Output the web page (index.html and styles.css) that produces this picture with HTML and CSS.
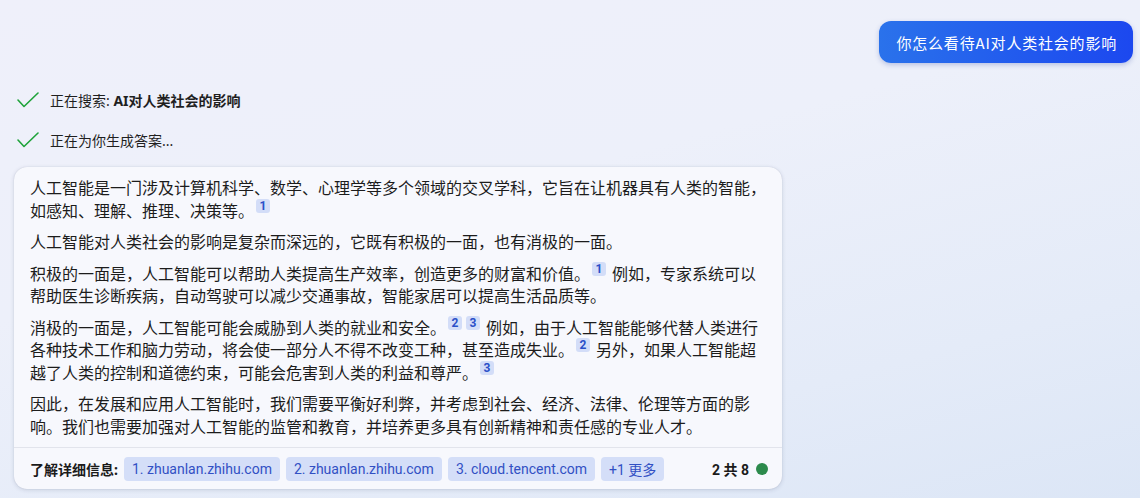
FILE: index.html
```html
<!DOCTYPE html>
<html lang="zh-CN">
<head>
<meta charset="utf-8">
<link rel="stylesheet" href="styles.css">
</head>
<body>
<div class="page">
  <div class="user-row">
    <div class="bubble">你怎么看待AI对人类社会的影响</div>
  </div>

  <div class="status">
    <div class="status-row">
      <svg class="check" width="22" height="16" viewBox="0 0 22 16"><polyline points="1,8 7,14.5 21,1" fill="none" stroke="#1fa33a" stroke-width="1.6" stroke-linecap="round" stroke-linejoin="round"/></svg>
      <span class="status-text">正在搜索: <b>AI对人类社会的影响</b></span>
    </div>
    <div class="status-row">
      <svg class="check" width="22" height="16" viewBox="0 0 22 16"><polyline points="1,8 7,14.5 21,1" fill="none" stroke="#1fa33a" stroke-width="1.6" stroke-linecap="round" stroke-linejoin="round"/></svg>
      <span class="status-text">正在为你生成答案...</span>
    </div>
  </div>

  <div class="card">
    <div class="card-body">
      <p>人工智能是一门涉及计算机科学、数学、心理学等多个领域的交叉学科，它旨在让机器具有人类的智能，如感知、理解、推理、决策等。<span class="cites"><span class="cite">1</span></span></p>
      <p>人工智能对人类社会的影响是复杂而深远的，它既有积极的一面，也有消极的一面。</p>
      <p>积极的一面是，人工智能可以帮助人类提高生产效率，创造更多的财富和价值。<span class="cites"><span class="cite">1</span></span>例如，专家系统可以帮助医生诊断疾病，自动驾驶可以减少交通事故，智能家居可以提高生活品质等。</p>
      <p>消极的一面是，人工智能可能会威胁到人类的就业和安全。<span class="cites"><span class="cite">2</span><span class="cite">3</span></span>例如，由于人工智能能够代替人类进行各种技术工作和脑力劳动，将会使一部分人不得不改变工种，甚至造成失业。<span class="cites"><span class="cite">2</span></span>另外，如果人工智能超越了人类的控制和道德约束，可能会危害到人类的利益和尊严。<span class="cites"><span class="cite">3</span></span></p>
      <p>因此，在发展和应用人工智能时，我们需要平衡好利弊，并考虑到社会、经济、法律、伦理等方面的影响。我们也需要加强对人工智能的监管和教育，并培养更多具有创新精神和责任感的专业人才。</p>
    </div>
    <div class="card-footer">
      <span class="learn">了解详细信息:</span>
      <span class="chip">1. zhuanlan.zhihu.com</span>
      <span class="chip">2. zhuanlan.zhihu.com</span>
      <span class="chip">3. cloud.tencent.com</span>
      <span class="chip">+1 更多</span>
      <span class="count">2 共 8</span>
      <span class="dot"></span>
    </div>
  </div>
</div>
</body>
</html>
```

FILE: styles.css
```css
* { box-sizing: border-box; }
html, body { margin: 0; padding: 0; }
body {
  width: 1140px;
  height: 498px;
  overflow: hidden;
  font-family: "Noto Sans", "Noto Sans CJK SC", sans-serif;
  color: #1b1b1b;
  background: linear-gradient(165deg, #eff0fa 0%, #edf0fa 40%, #e4ebf8 75%, #dce6f6 100%);
}
.page {
  padding: 21px 7px 0 14px;
}
.user-row {
  display: flex;
  justify-content: flex-end;
}
.bubble {
  height: 42px;
  padding: 0 16px 0 17px;
  display: flex;
  align-items: center;
  border-radius: 12px;
  background: linear-gradient(90deg, #2a72eb 0%, #2158ee 60%, #1c48ef 100%);
  color: #fff;
  font-size: 15px;
  letter-spacing: 0.8px;
  font-family: "Noto Sans CJK SC", sans-serif;
  box-shadow: 0 2px 5px rgba(30, 60, 160, 0.25);
}
.status {
  margin-top: 27px;
  padding-left: 3px;
  display: flex;
  flex-direction: column;
  gap: 20px;
}
.status-row {
  height: 20px;
  display: flex;
  align-items: center;
}
.check { flex: none; margin-right: 11px; }
.status-text {
  font-size: 14px;
  color: #1f1f1f;
}
.status-text b { font-weight: 700; }
.card {
  margin-top: 17px;
  width: 768px;
  border-radius: 13px;
  background: #f7f8fd;
  box-shadow: 0 1px 4px rgba(40, 50, 90, 0.16), 0 0 1px rgba(40, 50, 90, 0.2);
  overflow: hidden;
}
.card-body {
  padding: 9px 14px 10px 16px;
}
.card-body p {
  margin: 0 0 9px 0;
  font-size: 16px;
  line-height: 22.5px;
  color: #1c1c1c;
  font-family: "Noto Sans CJK SC", sans-serif;
}
.card-body p:last-child { margin-bottom: 0; }
.cites {
  display: inline-flex;
  gap: 4px;
  margin: 0 6px 0 2px;
  vertical-align: top;
}
.cite {
  width: 14px;
  height: 14px;
  border-radius: 3px;
  background: #d3ddf8;
  color: #2a4fc8;
  font-family: Roboto, "Noto Sans", sans-serif;
  font-size: 12px;
  font-weight: 700;
  line-height: 14px;
  text-align: center;
}
.card-footer {
  height: 42px;
  border-top: 1px solid #e2e4ec;
  display: flex;
  align-items: center;
  padding: 0 14px 0 16px;
  gap: 6px;
}
.learn {
  font-size: 14px;
  font-weight: 700;
  color: #1b1b1b;
}
.chip {
  height: 24px;
  display: flex;
  align-items: center;
  padding: 0 8px;
  border-radius: 4px;
  background: #d4def8;
  color: #3250c4;
  font-family: Roboto, "Noto Sans CJK SC", sans-serif;
  font-size: 14px;
}
.count {
  margin-left: auto;
  font-size: 14px;
  font-weight: 700;
  font-family: Roboto, "Noto Sans CJK SC", sans-serif;
  color: #1b1b1b;
}
.dot {
  width: 12px;
  height: 12px;
  margin-left: 1px;
  border-radius: 50%;
  background: #2c8a4c;
}
```
